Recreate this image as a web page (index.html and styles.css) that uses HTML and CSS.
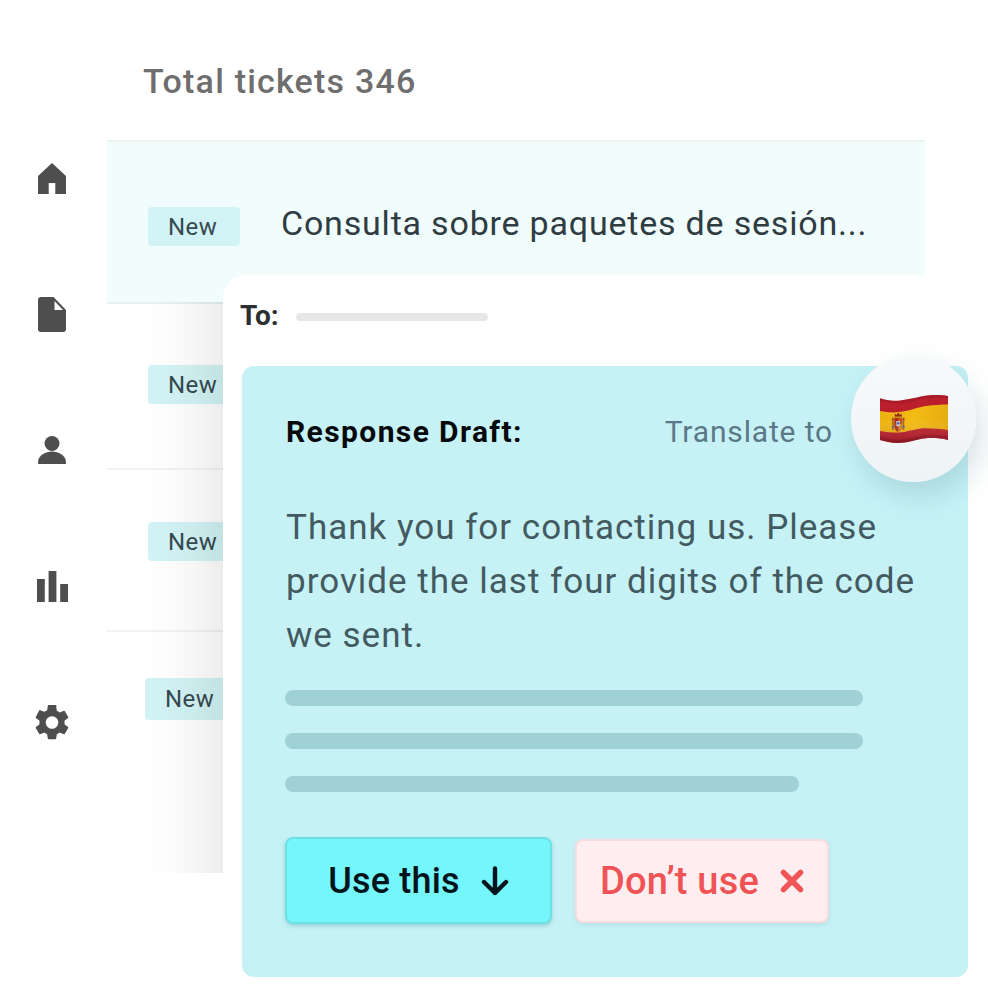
FILE: index.html
```html
<!DOCTYPE html>
<html lang="en">
<head>
<meta charset="utf-8">
<title>Tickets</title>
<link rel="stylesheet" href="styles.css">
</head>
<body>
<div class="app">
  <nav class="sidebar">
    <span class="nav-item"><svg class="icon icon-home" viewBox="0 0 28 31"><path d="M14 0 L28 13 V31 H17.300 V20 H10.700 V31 H0 V13 Z"/></svg></span>
    <span class="nav-item"><svg class="icon icon-file" viewBox="0 0 28 35"><path fill-rule="evenodd" d="M3 0 H15.500 L28 13 V32 a3 3 0 0 1 -3 3 H3 a3 3 0 0 1 -3 -3 V3 a3 3 0 0 1 3 -3 Z M16.500 4 V13 H25 Z"/></svg></span>
    <span class="nav-item"><svg class="icon icon-user" viewBox="0 0 28 28"><circle cx="14" cy="7.500" r="7.500"/><path d="M0 28 V26.500 C0 19 8 15.500 14 15.500 S28 19 28 26.500 V28 Z"/></svg></span>
    <span class="nav-item"><svg class="icon icon-bars" viewBox="0 0 31 31"><path d="M0 8 H7.800 V31 H0 Z M11.600 0 H19.400 V31 H11.600 Z M23.200 13 H31 V31 H23.200 Z"/></svg></span>
    <span class="nav-item"><svg class="icon icon-gear" viewBox="2.400 2 19.200 20"><path d="M19.140 12.940c.04-.3.06-.61.06-.94s-.02-.64-.07-.94l2.030-1.580a.49.49 0 0 0 .12-.61l-1.920-3.320a.49.49 0 0 0-.59-.22l-2.390.96a7 7 0 0 0-1.620-.94l-.36-2.540A.48.48 0 0 0 13.920 2h-3.840a.47.47 0 0 0-.47.41l-.36 2.540c-.59.24-1.130.57-1.620.94l-2.390-.96a.48.48 0 0 0-.59.22L2.730 8.870a.48.48 0 0 0 .12.61l2.030 1.580c-.05.3-.08.63-.08.94s.02.64.07.94l-2.030 1.580a.49.49 0 0 0-.12.61l1.920 3.320c.12.22.37.29.59.22l2.390-.96c.5.38 1.030.7 1.620.94l.36 2.540c.05.24.24.41.48.41h3.840c.24 0 .44-.17.47-.41l.36-2.540c.59-.24 1.130-.56 1.620-.94l2.390.96c.22.08.47 0 .59-.22l1.920-3.320a.48.48 0 0 0-.12-.61l-2.010-1.580ZM12 15.600A3.600 3.600 0 1 1 12 8.400a3.600 3.600 0 0 1 0 7.200Z"/></svg></span>
  </nav>
  <main class="main">
    <h1 class="title">Total tickets 346</h1>
    <div class="list">
      <div class="row row-active"><span class="badge badge-active">New</span><span class="subject">Consulta sobre paquetes de sesión...</span></div>
      <div class="row row-2"><span class="badge">New</span></div>
      <div class="row row-3"><span class="badge">New</span></div>
      <div class="row row-4"><span class="badge badge-wide">New</span></div>
      <div class="shade"></div>
    </div>
  </main>
</div>
<section class="card">
  <div class="to"><b class="to-label">To:</b><span class="to-line"></span></div>
  <div class="draft">
    <div class="draft-head"><b class="draft-title">Response Draft:</b><span class="translate">Translate to</span></div>
    <p class="draft-text">Thank you for contacting us. Please provide the last four digits of the code we sent.</p>
    <div class="skeleton">
      <span class="bar"></span>
      <span class="bar"></span>
      <span class="bar bar-short"></span>
    </div>
    <div class="actions">
      <button class="btn btn-use">Use this
        <svg class="btn-icon" viewBox="0 0 28 30"><path d="M14 2.500 V27 M3 16 L14 27 L25 16" fill="none" stroke="#04141c" stroke-width="4.400" stroke-linecap="round" stroke-linejoin="round"/></svg>
      </button>
      <button class="btn btn-skip">Don’t use
        <svg class="btn-icon btn-icon-x" viewBox="0 0 24 24"><path d="M3.500 3.500 L20.500 20.500 M20.500 3.500 L3.500 20.500" fill="none" stroke="#f25555" stroke-width="5.500" stroke-linecap="round"/></svg>
      </button>
    </div>
  </div>
  <div class="flag-bubble">
    <svg class="flag" viewBox="0 0 68 48">
      <defs>
        <clipPath id="wave"><path d="M0 3.300 C6 5 12 6.500 20 5.500 C32 4 42 .5 53 0 C59 -.2 64 .2 68 1 V45 C60 43 52 42.500 44 43.500 C35 45 27 48 18 48 C11 48 5 46.500 0 45 Z"/></clipPath>
        <linearGradient id="sheen" x1="0" y1="0" x2="0" y2="1">
          <stop offset="0" stop-color="#fff" stop-opacity="0"/>
          <stop offset=".5" stop-color="#fff" stop-opacity="0"/>
          <stop offset="1" stop-color="#3a0006" stop-opacity=".25"/>
        </linearGradient>
        <linearGradient id="gold" x1="0" y1="0" x2="1" y2="0">
          <stop offset="0" stop-color="#eeb20f"/>
          <stop offset=".5" stop-color="#f3bb14"/>
          <stop offset="1" stop-color="#e7ad10"/>
        </linearGradient>
      </defs>
      <g clip-path="url(#wave)">
        <rect y="-1" width="68" height="50" fill="#bb1f2c"/>
        <path d="M0 16 C6 17 12 18 19 17 C30 16 38 12 46 11 C54 10 62 9.500 68 9.500 V35 C60 34 50 33 43 33.300 C34 34 26 37.500 19 37.500 C12 37.500 6 37 0 36 Z" fill="url(#gold)"/>
        <path d="M0 3.300 C6 5 12 6.500 20 5.500 C32 4 42 .5 53 0 C59 -.2 64 .2 68 1 V3.500 C60 2.700 52 3 44 4 C35 5.500 27 8.500 18 8.500 C11 8.500 5 7 0 5.500 Z" fill="#8f1622" opacity=".4"/>
        <path d="M0 41 C6 43 12 44.500 18 44.500 C27 44.500 35 41.500 44 40 C52 39 60 39.500 68 41 V45 H0 Z M0 45 H68 V48 H0 Z" fill="#7d0f1b" opacity=".4"/>
        <rect x="12" y="22.500" width="1.800" height="12.500" fill="#9b6a1c"/>
        <rect x="22.500" y="22.500" width="1.800" height="12.500" fill="#9b6a1c"/>
        <rect x="11.500" y="24" width="2.800" height="1.200" fill="#c5481f"/>
        <rect x="22" y="24" width="2.800" height="1.200" fill="#c5481f"/>
        <rect x="11.500" y="31" width="2.800" height="1.400" fill="#5e6aa0"/>
        <rect x="22" y="31" width="2.800" height="1.400" fill="#5e6aa0"/>
        <path d="M14.500 23 H22 V31 C22 34.500 20 36.500 18.200 36.500 C16.500 36.500 14.500 34.500 14.500 31 Z" fill="#c94e1d"/>
        <path d="M14.500 23 H18.200 V29 H14.500 Z" fill="#b3261f"/>
        <path d="M18.200 29 H22 V31 C22 33 21 35 19 36 L18.200 36.500 Z" fill="#d9851d"/>
        <path d="M14.500 29 H18.200 V36.500 C16.500 36.500 14.500 34.500 14.500 31 Z" fill="#a8321a"/>
        <path d="M16.300 26 H20 V30.500 C19 32 17.300 32 16.300 30.500 Z" fill="#c2c4dc"/>
        <circle cx="18.200" cy="28.300" r="1.300" fill="#5a63a8"/>
        <path d="M14.500 22.500 L15 18.500 L16.500 20 L18.200 17.500 L20 20 L21.500 18.500 L22 22.500 Z" fill="#8d2a1c"/>
        <rect x="14.500" y="21.500" width="7.500" height="1.300" fill="#d59b1a"/>
        <rect width="68" height="48" fill="url(#sheen)"/>
      </g>
    </svg>
  </div>
</section>
</body>
</html>
```
FILE: styles.css
```css
* { box-sizing: border-box; }
html, body { margin: 0; height: 1005px; background: #fff; overflow: hidden; }
body { position: relative; font-family: "Roboto", "Liberation Sans", sans-serif; }
.app { display: flex; height: 873px; }
.sidebar {
  width: 107px; flex: none; padding: 110px 3px 0 0;
  display: flex; flex-direction: column;
}
.nav-item { height: 136px; flex: none; display: flex; align-items: center; justify-content: center; }
.icon { fill: #4e4e4e; display: block; }
.icon-home { width: 28px; height: 31px; }
.icon-file { width: 28px; height: 35px; }
.icon-user { width: 28px; height: 28px; }
.icon-bars { width: 31px; height: 31px; }
.icon-gear { width: 34px; height: 35px; }
.main { flex: 1; padding-right: 63px; min-width: 0; }
.title {
  margin: 0; padding: 61px 0 0 36px; height: 140px;
  font-size: 34px; line-height: 40px; font-weight: 500; color: #6e6e6e; letter-spacing: 1.2px;
}
.list { position: relative; height: 733px; border-top: 2px solid #edf2f3; overflow: hidden; }
.row { display: flex; align-items: flex-start; padding-left: 41px; border-bottom: 2px solid #f0f2f3; }
.row-active { height: 162px; background: #f1fcfd; border-bottom-color: #e8f1f2; gap: 41px; align-items: center; padding-top: 2px; }
.row-2 { height: 166px; padding-top: 61px; }
.row-3 { height: 162px; padding-top: 52px; }
.row-4 { height: 240px; border-bottom: 0; padding-top: 46px; padding-left: 38px; }
.badge {
  width: 92px; height: 39px; border-radius: 4px; background: #d2f3f5; color: #36494f;
  font-size: 24px; line-height: 41px; padding-left: 20px; letter-spacing: .45px; flex: none;
}
.badge-active { margin-top: 7px; }
.badge-wide { width: 100px; height: 42px; line-height: 42px; }
.subject { font-size: 34px; line-height: 40px; color: #2f3d42; letter-spacing: .8px; white-space: nowrap; }
.shade {
  position: absolute; left: 40px; top: 160px; bottom: 0; width: 76px;
  background: linear-gradient(90deg, rgba(0,0,0,0), rgba(0,0,0,.012) 30%, rgba(0,0,0,.04) 65%, rgba(0,0,0,.075));
}
.card {
  position: absolute; left: 223px; top: 275px; right: 0; bottom: 0;
  background: #fff; border-radius: 22px 0 0 0; padding: 0 20px 28px 19px;
  display: flex; flex-direction: column;
}
.to { height: 91px; display: flex; align-items: flex-start; padding-top: 24px; }
.to-label { font-size: 28px; line-height: 34px; font-weight: 700; color: #2b2f31; margin-left: -2px; width: 56px; }
.to-line { width: 192px; height: 8px; margin-top: 14px; border-radius: 4px; background: #e6e6e6; }
.draft {
  height: 611px; background: #c6f2f6; border-radius: 12px; padding: 42px 43px 0;
}
.draft-head { display: flex; justify-content: space-between; align-items: center; padding: 0 92px 0 1px; height: 46px; }
.draft-title { font-size: 30px; font-weight: 700; color: #06090b; letter-spacing: 1.4px; }
.translate { font-size: 30px; color: #5c7886; letter-spacing: .85px; }
.draft-text { margin: 47px 0 0 1px; font-size: 35px; line-height: 54px; color: #435a60; letter-spacing: 1px; width: 640px; }
.skeleton { display: flex; flex-direction: column; gap: 27px; margin-top: 27px; }
.bar { display: block; width: 578px; height: 16px; border-radius: 8px; background: #9fd1d5; }
.bar-short { width: 514px; }
.actions { display: flex; gap: 23px; align-items: center; margin-top: 45px; }
.btn {
  display: flex; align-items: center; justify-content: center; border-radius: 8px; font-family: inherit;
  font-weight: 500; cursor: pointer;
}
.btn-use {
  width: 267px; height: 87px; background: #74f6fb; color: #04141c; gap: 21px; font-size: 36px; letter-spacing: .2px;
  border: 2px solid #6fdfe6; box-shadow: 0 2px 4px rgba(60,150,160,.35);
}
.btn-skip {
  width: 254px; height: 84px; background: #ffeeef; color: #f05355; gap: 21px; font-size: 38px; letter-spacing: .2px;
  border: 2px solid #f9dcdf; box-shadow: 0 2px 4px rgba(120,150,160,.2);
}
.btn-icon { width: 28px; height: 30px; }
.btn-icon-x { width: 24px; height: 24px; }
.flag-bubble {
  position: absolute; left: 628px; top: 80px; width: 125px; height: 127px; border-radius: 50%;
  background: linear-gradient(#f7fafb, #eef3f5); box-shadow: 6px 14px 28px rgba(60,110,120,.2);
  display: flex; align-items: center; justify-content: center;
}
.flag { width: 68px; height: 48px; display: block; }
```
